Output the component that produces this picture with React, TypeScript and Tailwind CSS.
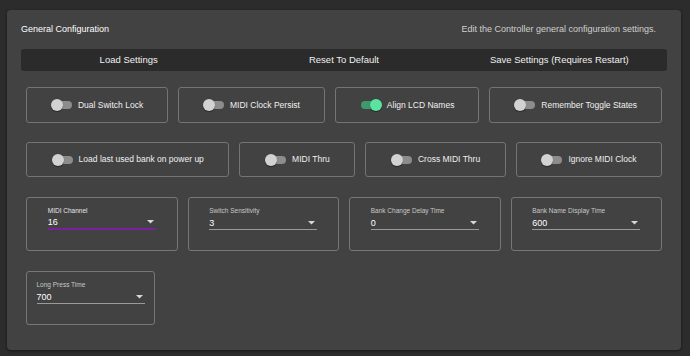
const TOGGLE_ROW_1 = [
  { label: "Dual Switch Lock", on: false },
  { label: "MIDI Clock Persist", on: false },
  { label: "Align LCD Names", on: true },
  { label: "Remember Toggle States", on: false },
];

const TOGGLE_ROW_2 = [
  { label: "Load last used bank on power up", on: false },
  { label: "MIDI Thru", on: false },
  { label: "Cross MIDI Thru", on: false },
  { label: "Ignore MIDI Clock", on: false },
];

const SELECTS = [
  { label: "MIDI Channel", value: "16", focused: true },
  { label: "Switch Sensitivity", value: "3", focused: false },
  { label: "Bank Change Delay Time", value: "0", focused: false },
  { label: "Bank Name Display Time", value: "600", focused: false },
];

function Switch({ on }: { on: boolean }) {
  return (
    <span className="relative inline-block h-[12px] w-[22px] shrink-0">
      <span
        className={`absolute left-[1px] top-[2px] h-[8px] w-[20px] rounded-full ${
          on ? "bg-[#3e9a6c]" : "bg-[#8c8c8c]"
        }`}
      />
      <span
        className={`absolute top-0 h-[12px] w-[12px] rounded-full shadow-[0_1px_1px_rgba(0,0,0,0.4)] ${
          on ? "right-0 bg-[#5be4a0]" : "left-0 bg-[#d2d2d2]"
        }`}
      />
    </span>
  );
}

function ToggleBox({ label, on }: { label: string; on: boolean }) {
  return (
    <div className="flex flex-auto items-center justify-center gap-[5px] rounded-[3px] border border-[#747474] px-[10px]">
      <Switch on={on} />
      <span className="whitespace-nowrap text-[8.5px] text-[#f0f0f0]">{label}</span>
    </div>
  );
}

function SelectBox({
  label,
  value,
  focused,
  className = "",
}: {
  label: string;
  value: string;
  focused: boolean;
  className?: string;
}) {
  return (
    <div className={`flex h-[54px] justify-center rounded-[3px] border border-[#777777] pt-[8px] ${className}`}>
      <div className="w-[108px]">
        <div className={`text-[6.5px] leading-[10px] ${focused ? "text-[#e6e6e6]" : "text-[#c8c8c8]"}`}>{label}</div>
        <div
          className={`flex h-[14px] items-center justify-between ${
            focused ? "border-b-2 border-[#7b1fa2]" : "border-b border-[#9a9a9a]"
          }`}
        >
          <span className="text-[9px] leading-[10px] text-white">{value}</span>
          <svg width="7" height="4" viewBox="0 0 7 4" className="mr-[2px]">
            <polygon points="0,0 7,0 3.5,3.5" fill="#d8d8d8" />
          </svg>
        </div>
      </div>
    </div>
  );
}

export default function App() {
  return (
    <div
      className="h-[356px] w-[690px] bg-[#2c2c2c] pl-[7px] pt-[10px]"
      style={{ fontFamily: '"Liberation Sans", Arial, sans-serif' }}
    >
      <div className="h-[340px] w-[674px] rounded-[4px] bg-[#424242] px-[14px] pt-[14px] shadow-[0_1px_3px_rgba(0,0,0,0.5)]">
        {/* Header */}
        <div className="flex h-[12px] items-center justify-between pr-[11px] text-[9px]">
          <span className="text-white">General Configuration</span>
          <span className="text-[#cfcfcf]">Edit the Controller general configuration settings.</span>
        </div>

        {/* Action bar */}
        <div className="mt-[13px] grid h-[22px] grid-cols-3 rounded-[3px] bg-[#2b2b2b] text-[9.5px] text-[#f0f0f0]">
          <button type="button" className="flex items-center justify-center">Load Settings</button>
          <button type="button" className="flex items-center justify-center">Reset To Default</button>
          <button type="button" className="flex items-center justify-center">Save Settings (Requires Restart)</button>
        </div>

        <div className="px-[5px]">
          {/* Toggles */}
          <div className="mt-[16px] flex h-[36px] gap-[10px]">
            {TOGGLE_ROW_1.map((t) => (
              <ToggleBox key={t.label} {...t} />
            ))}
          </div>
          <div className="mt-[19px] flex h-[35px] gap-[10px]">
            {TOGGLE_ROW_2.map((t) => (
              <ToggleBox key={t.label} {...t} />
            ))}
          </div>

          {/* Selects */}
          <div className="mt-[20px] grid grid-cols-4 gap-[10px]">
            {SELECTS.map((s) => (
              <SelectBox key={s.label} {...s} />
            ))}
          </div>
          <div className="mt-[20px] flex">
            <SelectBox label="Long Press Time" value="700" focused={false} className="w-[129px]" />
          </div>
        </div>
      </div>
    </div>
  );
}
